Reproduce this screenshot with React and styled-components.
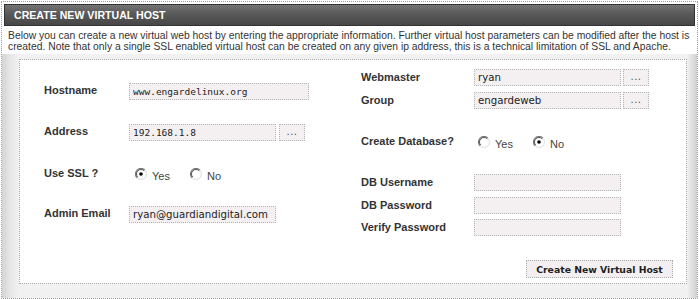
import React from 'react';
import styled, { createGlobalStyle } from 'styled-components';

const GlobalStyle = createGlobalStyle`
  html, body {
    margin:0;
    padding:0;
    background:#fff;
  }
  body {
    font-family:"Liberation Sans", Arial, sans-serif;
  }
`

const Panel = styled.div`
  box-sizing:border-box;
  width:697px;
  height:298px;
  margin:1px 0 0 1px;
  border:1px dotted #9a9a9a;
  display:flex;
  flex-direction:column;
  background:#fff;
`

const Header = styled.div`
  box-sizing:border-box;
  height:22px;
  margin:2px 2px 0;
  padding-left:9px;
  display:flex;
  align-items:center;
  background:linear-gradient(#737373, #585858 45%, #474747);
  border:1px solid #333;
  color:#fff;
  font-weight:bold;
  font-size:10.6px;
`

const Intro = styled.p`
  margin:0;
  padding:4px 2px 0 6px;
  font-size:10.35px;
  line-height:11px;
  color:#333;
`

const Backdrop = styled.div`
  flex:1;
  display:flex;
  padding:5px 10px 14px 17px;
  margin-top:2px;
  background:
    linear-gradient(to right, #d4d4d4 0px, #e6e6e6 8px, #f1f1f1 17px, rgba(241,241,241,0) 40px),
    linear-gradient(to left, #cfcfcf 0px, #e4e4e4 6px, #f1f1f1 10px),
    #f1f1f1;
`

const FormBox = styled.div`
  flex:1;
  display:flex;
  flex-direction:column;
  border:1px dotted #a5a5a5;
  background:#fff;
`

const Columns = styled.div`
  display:flex;
  align-items:center;
  margin-top:9px;
`

const Column = styled.div`
  box-sizing:border-box;
  display:flex;
  flex-direction:column;
  width:${({ $width }) => $width}px;
  padding-left:${({ $pad }) => $pad || 0}px;
`

const Row = styled.div`
  display:flex;
  align-items:center;
  height:17px;
  margin-top:${({ $gap }) => $gap || 0}px;
`

const Label = styled.div`
  width:${({ $width }) => $width}px;
  flex-shrink:0;
  font-weight:bold;
  font-size:11px;
  color:#333;
  margin-top:-2px;
`

const Input = styled.input`
  box-sizing:border-box;
  width:${({ $width }) => $width || 147}px;
  height:17px;
  margin:0;
  padding:0 3px;
  border:1px dotted #b4b4b4;
  background:#f4f0f2;
  color:#222;
  font-family:${({ $mono }) => $mono ? '"DejaVu Sans Mono", monospace' : '"DejaVu Sans", sans-serif'};
  font-size:${({ $mono }) => $mono ? 9.5 : 10.2}px;
  outline:none;
`

const Browse = styled.button`
  box-sizing:border-box;
  width:26px;
  height:17px;
  margin:0 0 0 ${({ $gap }) => $gap || 3}px;
  padding:0 0 2px;
  border:1px dotted #b4b4b4;
  background:#f4f0f2;
  color:#555;
  font-family:"DejaVu Sans", sans-serif;
  font-size:10px;
  letter-spacing:0.5px;
`

const Radios = styled.div`
  display:flex;
  align-items:center;
  padding-left:${({ $pad }) => $pad}px;
`

const Option = styled.label`
  display:flex;
  align-items:center;
  margin-right:20px;
  font-size:11px;
  color:#444;
`

const OptionText = styled.span`
  margin-left:5px;
  padding-top:4px;
`

const Footer = styled.div`
  display:flex;
  justify-content:flex-end;
  margin-top:24px;
  padding-right:13px;
`

const Submit = styled.button`
  box-sizing:border-box;
  width:147px;
  height:18px;
  margin:0;
  padding:0;
  border:1px dotted #aaa;
  background:#f3eff1;
  color:#1e1e1e;
  font-family:"DejaVu Sans", sans-serif;
  font-weight:bold;
  font-size:9.3px;
`

function RadioMark({ checked }) {
  return (
    <svg width="12" height="12" viewBox="0 0 12 12">
      <path d="M9.9 2.1 A5.5 5.5 0 0 0 2.1 9.9" fill="none" stroke="#7a7a7a" strokeWidth="1.2" />
      <path d="M9.2 2.8 A4.5 4.5 0 0 0 2.8 9.2" fill="none" stroke="#3c3c3c" strokeWidth="0.9" />
      <path d="M2.1 9.9 A5.5 5.5 0 0 0 9.9 2.1" fill="none" stroke="#e4e4e4" strokeWidth="1.2" />
      {checked && <circle cx="6" cy="6" r="1.8" fill="#000" />}
    </svg>
  );
}

function RadioPair({ pad, value }) {
  return (
    <Radios $pad={pad}>
      <Option><RadioMark checked={value === 'yes'} /><OptionText>Yes</OptionText></Option>
      <Option><RadioMark checked={value === 'no'} /><OptionText>No</OptionText></Option>
    </Radios>
  );
}

export default function App() {
  return (
    <>
      <GlobalStyle />
      <Panel>
        <Header>CREATE NEW VIRTUAL HOST</Header>
        <Intro>
          Below you can create a new virtual web host by entering the appropriate information. Further virtual host parameters can be modified after the host is created. Note that only a single SSL enabled virtual host can be created on any given ip address, this is a technical limitation of SSL and Apache.
        </Intro>
        <Backdrop>
          <FormBox>
            <Columns>
              <Column $width={341} $pad={24}>
                <Row>
                  <Label $width={85}>Hostname</Label>
                  <Input $mono $width={180} defaultValue="www.engardelinux.org" />
                </Row>
                <Row $gap={24}>
                  <Label $width={85}>Address</Label>
                  <Input $mono defaultValue="192.168.1.8" />
                  <Browse>...</Browse>
                </Row>
                <Row $gap={25}>
                  <Label $width={85}>Use SSL ?</Label>
                  <RadioPair pad={6} value="yes" />
                </Row>
                <Row $gap={23}>
                  <Label $width={85}>Admin Email</Label>
                  <Input defaultValue="ryan@guardiandigital.com" />
                </Row>
              </Column>
              <Column $width={320}>
                <Row>
                  <Label $width={113}>Webmaster</Label>
                  <Input defaultValue="ryan" />
                  <Browse $gap={2}>...</Browse>
                </Row>
                <Row $gap={6}>
                  <Label $width={113}>Group</Label>
                  <Input defaultValue="engardeweb" />
                  <Browse $gap={2}>...</Browse>
                </Row>
                <Row $gap={24}>
                  <Label $width={113}>Create Database?</Label>
                  <RadioPair pad={4} value="no" />
                </Row>
                <Row $gap={24}>
                  <Label $width={113}>DB Username</Label>
                  <Input />
                </Row>
                <Row $gap={6}>
                  <Label $width={113}>DB Password</Label>
                  <Input type="password" />
                </Row>
                <Row $gap={5}>
                  <Label $width={113}>Verify Password</Label>
                  <Input type="password" />
                </Row>
              </Column>
            </Columns>
            <Footer>
              <Submit>Create New Virtual Host</Submit>
            </Footer>
          </FormBox>
        </Backdrop>
      </Panel>
    </>
  );
}
